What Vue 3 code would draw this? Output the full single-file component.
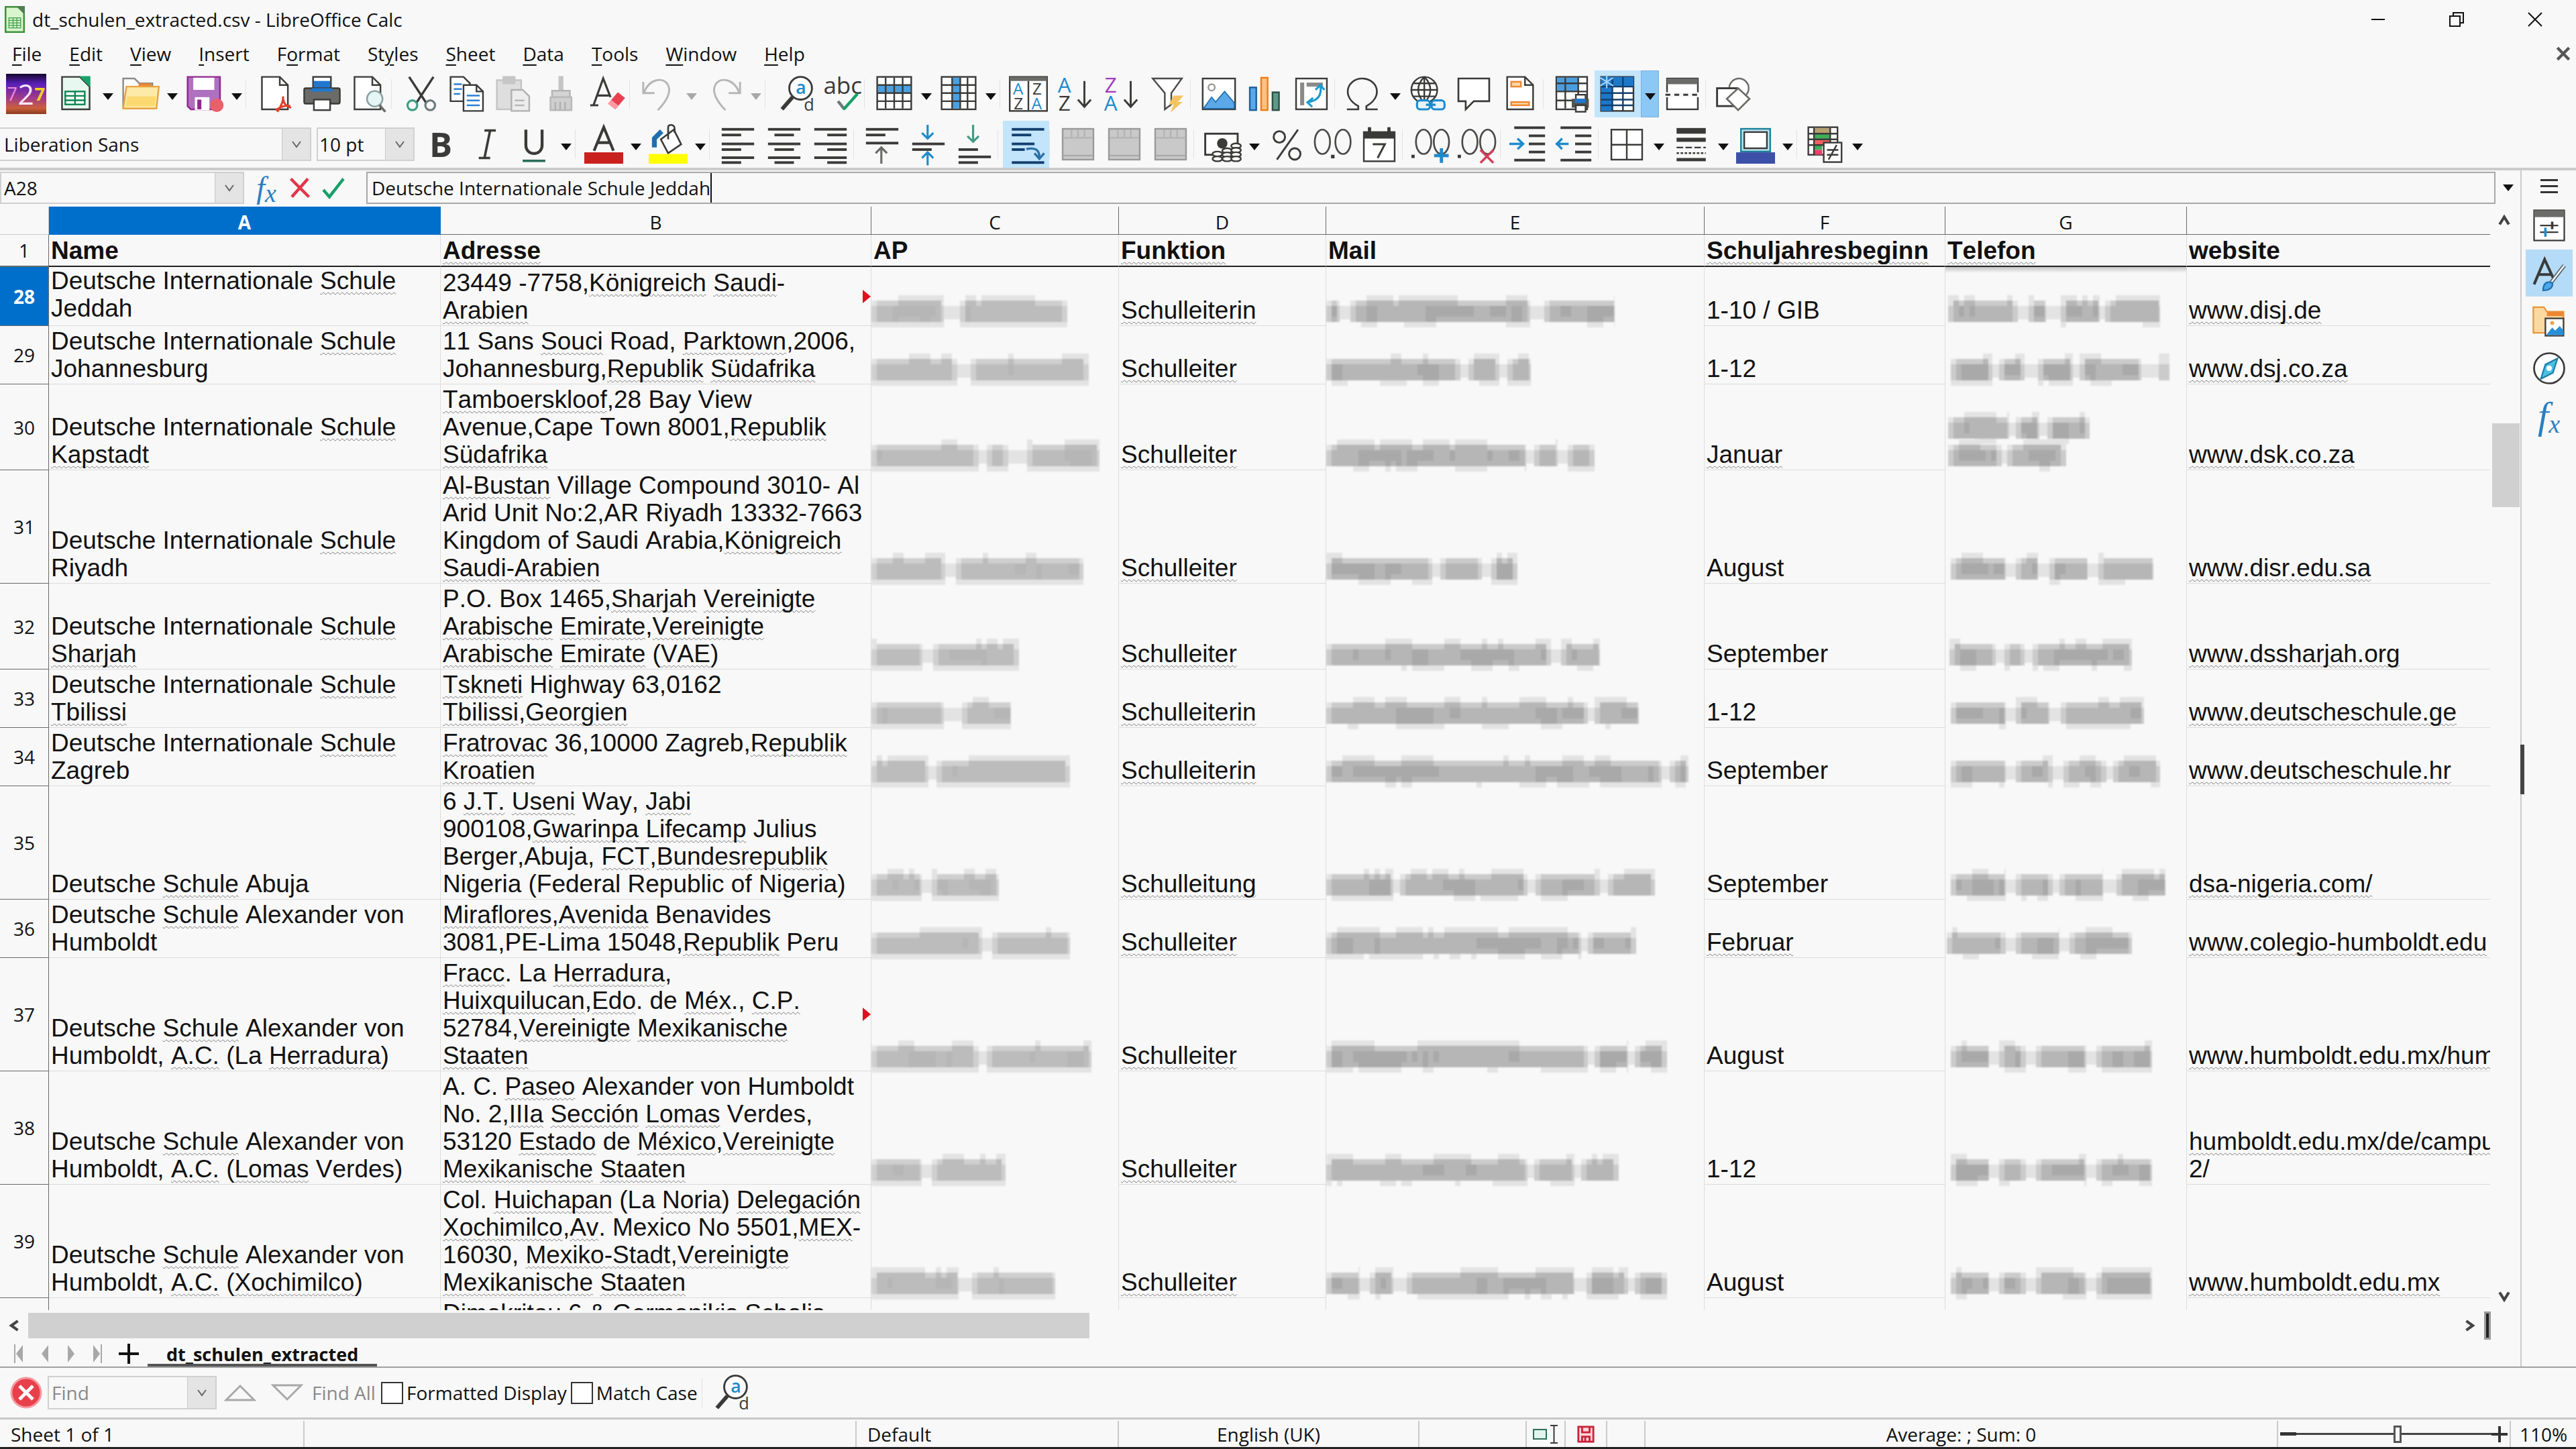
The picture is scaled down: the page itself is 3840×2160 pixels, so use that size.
<script setup>
import { ref } from 'vue'

const K = '#3a3a38'
const st = (d, c = K, w = 1, extra = '') =>
  `<path d="${d}" fill="none" stroke="${c}" stroke-width="${w}" ${extra}/>`
const box = (x, y, w, h, f = '#fff', s = K) =>
  `<rect x="${x}" y="${y}" width="${w}" height="${h}" fill="${f}" stroke="${s}"/>`
const bar = (x, y, w, h, f = K) => `<rect x="${x}" y="${y}" width="${w}" height="${h}" fill="${f}"/>`
const txt = (x, y, s, t, c = K, extra = '') =>
  `<text x="${x}" y="${y}" font-size="${s}" fill="${c}" font-family="Open Sans, sans-serif" ${extra}>${t}</text>`
const page = (x, s = K, f = '#fff') =>
  `<path d="M${x} 1.5h11l5 5v15h-16z" fill="${f}" stroke="${s}"/><path d="M${x + 11} 1.5v5h5" fill="none" stroke="${s}"/>`
const lines = (rows) => rows.map(([x, y, w]) => bar(x, y, w, 1.6)).join('')
const merge = '<rect x="2.5" y="2.500" width="19" height="19" fill="#c9c9c9" stroke="#9a9a9a"/><path d="M3 8h18M8 3v5M12 3v5M16 3v5" stroke="#b4b4b4" fill="none"/><path d="M3 19h18" stroke="#aaa"/>'
const zeros = (x) => `<ellipse cx="${x}" cy="10.500" rx="4.700" ry="7.500" fill="none" stroke="#4a4a48" stroke-width="1.100"/>`
const lens =
  `<g transform="translate(2.500 0)"><circle cx="13" cy="8.500" r="7" fill="#fff" stroke="${K}" stroke-width="1.200"/>` +
  st('M8 14l-6.500 7.500', K, 2.4) +
  txt(10, 12, 11, 'a', '#1e8bcd', 'font-weight="600"') +
  txt(15, 22.5, 10.5, 'd', K) + '</g>'

const icons = {
  app:
    '<defs><linearGradient id="dusk" x1="0" y1="0" x2="0" y2="1"><stop offset="0" stop-color="#14082e"/><stop offset=".25" stop-color="#5a1fb8"/><stop offset=".6" stop-color="#a03a8a"/><stop offset=".85" stop-color="#c9603c"/><stop offset="1" stop-color="#8a3a1e"/></linearGradient></defs><rect width="24" height="24" fill="url(#dusk)"/>' +
    txt(0.5, 16, 11, '7', '#f08adf') + txt(7, 18.5, 17, '2', '#ffe6ff') + txt(17, 16, 11, '7', '#f2d21e', 'font-weight="700"'),
  fresh:
    '<path d="M3.500 1.500h11l6 6v14h-17z" fill="#e6f8ef" stroke="#3a3a38"/><path d="M14 1h7v7z" fill="#18a068"/>' +
    '<rect x="5.500" y="10.500" width="12" height="8" fill="#fff" stroke="#0f8552"/><path d="M5 13.200h13M5 15.900h13M11.500 10v9" stroke="#0f8552" fill="none"/>',
  open:
    '<path d="M1.500 20.500v-18h7l3 3h8v5" fill="#fff" stroke="#8a8a88"/><path d="M11 5.500h8v2h-8z" fill="#ed8733"/><path d="M1.500 21l2-13.500h20L22 21z" fill="#fde9a8" stroke="#e8a33d"/><path d="M3 19.500h18l.6-6H4z" fill="#fbd970"/>',
  save:
    '<path d="M1.500 1.500h20v20h-18l-2-2z" fill="#b070c0" stroke="#92278f"/><rect x="5" y="2" width="13" height="7.500" fill="#fff"/><rect x="6" y="14" width="9" height="8" fill="#fff"/><rect x="7.500" y="15.500" width="2.500" height="6" fill="#92278f"/><circle cx="19.500" cy="19" r="4.200" fill="#e8606a"/>',
  pdf: page(3.5) + st('M13 23c2-3 4-7 3.500-9.500M12 22c3-2 6-3.500 9-2.500M16.500 15c.5 3 2 5 5 5.500', '#e0402a', 1.3),
  print:
    box(6.5, 1.5, 11, 7) + bar(7, 4, 10, 5, '#1e78d0') +
    '<rect x="1" y="8.500" width="22" height="9.500" rx="1" fill="#6b6b69" stroke="#3a3a38"/><path d="M6 8.500h12l1 2H5z" fill="#1e78d0"/>' + box(7, 15.5, 10, 6.5),
  preview: page(3.5) + '<circle cx="16" cy="15" r="4.800" fill="#e6f5f5" stroke="#8aa0a0"/>' + st('M19 19l3.500 4', '#6b6b69', 1.5),
  cut: st('M4.500 1.500l10.500 16M19.500 1.500L9 17.500', K, 1.4) + '<circle cx="6.500" cy="19" r="3" fill="none" stroke="#3f9c85" stroke-width="1.300"/><circle cx="17.500" cy="19" r="3" fill="none" stroke="#6b7b7b" stroke-width="1.300"/>',
  copy:
    '<path d="M1.500 1.500h8l4 4v11h-12z" fill="#fff" stroke="#3a3a38"/>' + st('M3.500 6h5M3.500 9h5M3.500 12h4', '#2a7fd0') +
    '<path d="M9.500 6.500h8l4 4v12h-12z" fill="#fff" stroke="#3a3a38"/>' + st('M17.500 6.500v4h4', K) + st('M11.500 13h8M11.500 16h8M11.500 19h8', '#2a7fd0'),
  paste:
    '<rect x="1.500" y="3.500" width="15" height="18" fill="#dedede" stroke="#c4c4c4"/><rect x="5" y="1" width="8" height="5" fill="#c6c6c6"/><path d="M10.500 9.500h7l4 4v9h-11z" fill="#ededed" stroke="#b0b0b0"/><path d="M12.500 16h6M12.500 19h6" stroke="#b8b8b8"/>',
  brush:
    '<path d="M11 1h3v9h-3z" fill="#c4c4c4"/><path d="M7 10h11v4H7z" fill="#d4d4d4" stroke="#b4b4b4"/><path d="M6 14h13v8H6z" fill="#cfcfcf" stroke="#b8b8b8"/><path d="M9 22v-5M12 22v-5M15 22v-5" stroke="#b0b0b0"/>',
  clear: st('M4 19L10 2.500 14.500 14M6.500 13h7', K, 1.3) + st('M2 19h5', K, 1.2) + '<path d="M13 18l6-7 4.500 3.500-6 7z" fill="#e8404e"/><path d="M13 18l2-2.300 4.500 3.500-2 2.300z" fill="#ff9aa2"/>',
  undo: st('M2 4.500v7h7M2.500 11C6 2.500 14 1.500 17 6s-1 11-6 16', '#b6b6b6', 1.2),
  redo: st('M22 4.500v7h-7M21.500 11C18 2.500 10 1.500 7 6s1 11 6 16', '#b6b6b6', 1.2),
  find: lens,
  spell: txt(1, 12, 14.5, 'abc') + st('M10 16.500l4 5', '#6b7b7b', 1.8) + st('M13.500 21.500L22 12', '#18a068', 1.8),
  row:
    box(1.5, 1.5, 21, 20) + bar(2, 6.5, 20, 5, '#4aa0e0') + st('M1.500 6.500h21M1.500 11.500h21M1.500 16.500h21M6.700 2v19M12 2v19M17.200 2v19'),
  col:
    box(1.5, 1.5, 21, 20) + bar(8, 2, 5, 19, '#4aa0e0') + st('M1.500 6.500h21M1.500 11.500h21M1.500 16.500h21M8 2v19M13 2v19M17.500 2v19'),
  sort:
    box(0.5, 1.5, 23, 21) + bar(0.5, 1.5, 23, 2.5, '#6b6b69') + st('M12 4v18') +
    txt(2.5, 12.5, 10, 'A', '#1e8bcd') + txt(3, 21.5, 10, 'Z') + txt(14.5, 12.5, 10, 'Z') + txt(14, 21.5, 10, 'A', '#1e8bcd'),
  asc: txt(1.5, 11, 13, 'A', '#1e8bcd') + txt(2, 22.5, 13, 'Z') + st('M18 4v16M14 15.500l4 4.500 4-4.500', K, 1.2),
  desc: txt(2, 11, 13, 'Z', '#a338c0') + txt(1.5, 22.5, 13, 'A', '#1e8bcd') + st('M18 4v16M14 15.500l4 4.500 4-4.500', K, 1.2),
  filter: '<path d="M3 2.500h18l-6.500 9v7l-4 3v-10z" fill="#fff" stroke="#4a4a48"/><path d="M16 13h6l-3.500 4h3L14 23.500l2-5h-3z" fill="#f5c460"/>',
  image: box(2, 2.5, 20, 19) + '<circle cx="7.500" cy="8" r="2" fill="none" stroke="#9a9a98"/><path d="M2.500 21l5-7 2.500 3 5.500-6.500 6 7V21z" fill="#5aa8e8" stroke="#1e6fb0" stroke-width=".7"/>',
  chart: box(2.5, 8, 4, 14, '#5aa8e8', '#1e5f9a') + box(9.5, 2, 4, 20, '#fcc080', '#ed7d1a') + box(16.5, 11, 4, 11, '#5d9a86', '#2c4f46'),
  pivot: box(2.5, 2.5, 19, 19) + bar(5, 5, 2.5, 14, '#8a8a88') + bar(9, 5, 10, 2.5, '#8a8a88') + st('M17.500 7c1 6-2 9-7 10M14.500 9.500l3-3 2.500 3M13 14.500l-3.500 2.700 3 2.800', '#1e9bd0', 1.3),
  omega: st('M2 21.500h7v-2C4.500 17 2.500 13.500 2.500 10.500 2.500 6 6.500 2.500 11.500 2.500s9 3.500 9 8c0 3-2 6.500-6.500 9v2h7', K, 1.1),
  link:
    '<circle cx="10" cy="9.500" r="8" fill="#fff" stroke="#3a3a38"/>' + st('M2 9.500h16M3.500 5.500h13M3.500 13.500h13M10 1.500v16M10 1.500c-5 5-5 11 0 16M10 1.500c5 5 5 11 0 16') +
    '<rect x="5.500" y="16" width="8" height="5.500" rx="2" fill="#e8f4fc" stroke="#1e8bcd" stroke-width="1.300"/><rect x="14.500" y="16" width="8" height="5.500" rx="2" fill="#e8f4fc" stroke="#1e8bcd" stroke-width="1.300"/>' + st('M11 18.700h6', '#1e8bcd', 1.4),
  note: '<path d="M2.500 2.500h19v14H12l-5 5v-5H2.500z" fill="#fff" stroke="#3a3a38" stroke-width="1.100"/>',
  header: page(4) + box(6.5, 4.5, 6, 3, '#fbd5a5', '#ed8733') + box(6.500, 17, 11, 2, '#fbd5a5', '#ed8733'),
  area:
    box(2.5, 1.5, 19, 20) + bar(3, 2, 13, 8.5, '#4a9ee0') + st('M2.500 5.500h19M2.500 10.500h19M2.500 16h19M8 2v19M16 2v19') +
    box(14.500, 12.500, 6, 4) + bar(12, 15, 10.5, 5.500, '#55534f') + bar(14, 15, 6.500, 2.600, '#1e78d0') + box(14.500, 19, 6, 4),
  freeze:
    box(1.5, 1.5, 20, 21) + bar(1.5, 1.5, 20, 6, '#1e78c8') + bar(1.5, 1.5, 7, 21, '#1e78c8') +
    st('M8.500 1.500v21M15 1.500v21M1.500 7.500h20M1.500 11.500h20M1.500 15.500h20M1.500 19h20', '#123f6e') +
    st('M5 .5v8M1 2l8 5M9 2L1 7', '#9fd4ff', 0.9),
  split: box(2.5, 2.5, 19, 19) + bar(2.5, 2.5, 19, 3.5, '#6b6b69') + bar(1, 11, 22, 3, '#f8f8f8') + st('M1.500 12.500h21', K, 1.2, 'stroke-dasharray="3 2.500"'),
  shapes: '<circle cx="15" cy="8.500" r="6" fill="#fff" stroke="#6b6b69"/><rect x="1.500" y="8.500" width="12" height="11" fill="#fff" stroke="#3a3a38" stroke-width="1.200"/><path d="M14.500 8.500l7 6.500-7 7-7-7z" fill="#fff" stroke="#6b6b69" stroke-width="1.100"/>',
  bold: txt(4.5, 20, 21, 'B', K, 'font-weight="700"'),
  italic: st('M10 3.500h7M6.500 20.500h7M13.500 3.500l-3.500 17', K, 1.5),
  underline: st('M7 3v9.500c0 7 10 7 10 0V3', K, 1.8) + bar(5, 21.5, 14, 1.5, '#2c6f5c'),
  color: st('M6 16L12 1.500 18 16M8 11h8', K, 1.7) + bar(0, 17, 24, 7, '#c9211e'),
  fill:
    st('M3.500 14V8.500L8 4', '#1e6fb0', 3) + '<path d="M7.500 9l8-6 4.500 9-8 5.500z" fill="#fff" stroke="#3a3a38" stroke-width="1.100"/>' + st('M12 9V1.500c0-2 4-2 4 1V5', K, 1.1) + bar(0, 18, 24, 6, '#ffff00'),
  left: lines([[2, 2, 20], [2, 5.500, 12], [2, 11, 20], [2, 14.500, 12], [2, 19.500, 20], [2, 22.500, 12]]),
  center: lines([[2, 2, 20], [6, 5.500, 12], [2, 11, 20], [6, 14.500, 12], [2, 19.500, 20], [6, 22.500, 12]]),
  right: lines([[2, 2, 20], [10, 5.500, 12], [2, 11, 20], [10, 14.500, 12], [2, 19.500, 20], [10, 22.500, 12]]),
  top: lines([[2, 2, 20], [2, 5.500, 12], [2, 10.500, 20]]) + st('M11.500 24V14M8 17.500l3.500-3.500 3.500 3.500', '#6b6b69', 1.3),
  middle: lines([[2, 11, 20], [2, 14.500, 12]]) + st('M11.500 0v8M8 5l3.500 3.500L15 5M11.500 25v-7M8 20.500l3.500-3.500 3.500 3.500', '#1e8bcd', 1.3),
  bottom: lines([[2, 14.500, 12], [2, 19, 20], [2, 22.500, 12]]) + st('M11 0v10M7.500 7l3.500 3.500L14.500 7', '#3f9c85', 1.3),
  wrap: [[3, 2, 20], [3, 5.500, 12], [3, 11, 14], [3, 14.500, 8], [3, 22.500, 20]].map(([x, y, w]) => bar(x, y, w, 1.6, '#123f6e')).join('') + st('M12 15c5-1 8 0 8 5M17 17.500l3 3.500 3-3.500', '#2a6fa8', 1.4),
  merge, mergeAll: merge, unmerge: merge,
  currency:
    '<rect x="1.500" y="5.500" width="20" height="13" fill="#fff" stroke="#3a3a38" stroke-width="1.200"/><circle cx="12" cy="11.500" r="3.200" fill="#3a3a38"/>' +
    '<g fill="#fff" stroke="#3a3a38"><ellipse cx="9" cy="18" rx="3" ry="1.500"/><ellipse cx="9" cy="21" rx="3" ry="1.500"/><ellipse cx="15" cy="16" rx="3" ry="1.500"/><ellipse cx="15" cy="18.500" rx="3" ry="1.500"/><ellipse cx="15" cy="21" rx="3" ry="1.500"/><ellipse cx="20.500" cy="13" rx="3" ry="1.500"/><ellipse cx="20.500" cy="15.700" rx="3" ry="1.500"/><ellipse cx="20.500" cy="18.400" rx="3" ry="1.500"/><ellipse cx="20.500" cy="21" rx="3" ry="1.500"/></g>',
  percent: st('M19 3L6 21.500', K, 1.2) + '<circle cx="7.500" cy="7.500" r="3.500" fill="none" stroke="#3a3a38" stroke-width="1.200"/><circle cx="17" cy="18" r="3.500" fill="none" stroke="#3a3a38" stroke-width="1.200"/>',
  number: zeros(5.5) + zeros(18.2) + bar(10.8, 18.5, 2.2, 2.2),
  date: box(2.5, 4.5, 19, 18) + bar(2.5, 4.5, 19, 4) + bar(5, 1.5, 2, 4) + bar(17, 1.500, 2, 4) + st('M8 12h7.500L11 20.500', K, 1.2),
  addDec: zeros(7.5) + zeros(18.5) + bar(0, 18.5, 2, 2) + bar(14, 18, 9, 2, '#1e8bcd') + bar(17.500, 14.500, 2, 9, '#1e8bcd'),
  delDec: zeros(7.5) + zeros(18.5) + bar(0, 18.5, 2, 2) + st('M14 23.500l8-8M14 15.500l8 8', '#d0405a', 1.4),
  indent: lines([[3, 1, 19], [12, 6, 10], [12, 11, 10], [12, 16, 10], [3, 21, 19]]) + st('M0 11.800h8M5 8.500l3.500 3.300L5 15', '#1e8bcd', 1.4),
  outdent: lines([[3, 1, 19], [12, 6, 10], [12, 11, 10], [12, 16, 10], [3, 21, 19]]) + st('M0 11.800h8M4 8.500L.8 11.800 4 15', '#1e8bcd', 1.4),
  borders: box(2.5, 3, 19, 18.500) + st('M12 3v18.500M2.500 12.300h19'),
  lineStyle: bar(3, 2, 18, 3.5) + bar(3, 8, 18, 2.5) + st('M3 14h18', K, 1, 'stroke-dasharray="4 1.500"') + st('M3 17.500h18', K, 1, 'stroke-dasharray="1.500 1"') + bar(3, 20.5, 18, 2),
  borderColor: box(3, 2.5, 18, 14, '#bfe6f5', '#1e7f9b') + box(5, 4.5, 14, 10) + bar(0, 17, 24, 7, '#3c50a8'),
  cond:
    box(1.5, 1.5, 18, 17) + bar(5, 2, 10, 3.500, '#b8a070') + bar(5, 5.5, 10, 3.500, '#3fae5a') + bar(5, 9, 10, 3.500, '#f06060') + bar(5, 12.5, 5, 3, '#3fae5a') + bar(5, 15.500, 5, 3, '#e8406a') +
    st('M1.500 5.500h18M1.500 9h18M1.500 12.500h18M5 2v17M15 2v17') + box(11, 11, 11, 12) + st('M13 15.500h7M13 18.500h7M19 12.500l-5 9'),
}

const main1 = [
  ['app'], ['fresh', 'c'], ['open', 'c'], ['save', 'c'], '||', ['pdf'], ['print'], ['preview'], '||',
  ['cut'], ['copy'], ['paste'], ['brush'], ['clear'], '||', ['undo', 'd'], ['redo', 'd'], '||', ['find'], ['spell'], '||',
  ['row', 'c'], ['col', 'c'], '|', ['sort'], ['asc'], ['desc'], ['filter'], '|', ['image'], ['chart'], ['pivot'], '|',
  ['omega', 'c'], ['link'], ['note'], ['header'], '|', ['area'], ['freeze', 'c', 'on'], ['split'], '|', ['shapes'],
]
const main2 = [
  ['bold'], ['italic'], ['underline', 'c'], '|', ['color', 'c'], ['fill', 'c'], '|', ['left'], ['center'], ['right'], '|',
  ['top'], ['middle'], ['bottom'], '|', ['wrap', '', 'on'], '|', ['merge'], ['mergeAll'], ['unmerge'], '|', ['currency', 'c'],
  ['percent'], ['number'], ['date'], '|', ['addDec'], ['delDec'], '|', ['indent'], ['outdent'], '|',
  ['borders', 'c'], ['lineStyle', 'c'], ['borderColor', 'c'], '|', ['cond', 'c'],
]

const side = {
  deck: box(2, 2, 20, 20) + bar(2, 2, 20, 4.500, '#6b6b69') + st('M6 12h12M6 16.500h12') + st('M14 9.500v5', K, 1.6) + st('M9.500 13.500v6', '#1e8bcd', 1.6),
  styles: st('M2 19.500L9 3l6 13M5 13h8', K, 1.8) + st('M22 7l-8.500 11', '#55656f', 2.6) + st('M22 7l-8.500 11', '#fff', 1) + '<path d="M8 23.500c0-5 3-6.500 6-5 1 3-2 5-6 5z" fill="#4aa8e8" stroke="#1e6fb0"/>',
  gallery: '<path d="M1.500 20V3h7l2 3h11v14z" fill="#fbd9a0" stroke="#e8973d"/><path d="M10.500 6h11v3h-11z" fill="#ed8733"/>' + box(9.5, 10.5, 12, 11.5) + '<path d="M10 21.500l4-5 2 2 3-3 2.500 3v3z" fill="#2a8fd8"/><circle cx="14" cy="13.500" r="1.300" fill="#f0a050"/>',
  compass: '<circle cx="12" cy="12" r="10" fill="#fff" stroke="#3a3a38" stroke-width="1.200"/><path d="M17.500 5.500l-3 9.500-8 4 3-9.500z" fill="#4ac0e0" stroke="#1e7fa8"/><circle cx="12" cy="12" r="1.800" fill="#fff"/>',
}

const menus = [['', 'F', 'ile'], ['', 'E', 'dit'], ['', 'V', 'iew'], ['', 'I', 'nsert'], ['F', 'o', 'rmat'], ['St', 'y', 'les'], ['', 'S', 'heet'], ['', 'D', 'ata'], ['', 'T', 'ools'], ['', 'W', 'indow'], ['', 'H', 'elp']]

const letters = ['A', 'B', 'C', 'D', 'E', 'F', 'G', '']
const heads = ['Name', '~Adresse~', 'AP', '~Funktion~', 'Mail', '~Schuljahresbeginn~', '~Telefon~', 'website']

const dis = 'Deutsche Internationale ~Schule~\n'
const dsa = 'Deutsche ~Schule~ Alexander von\n'
const rows = [
  { n: 28, a: dis + 'Jeddah', b: '23449 -7758,~Königreich~ ~Saudi~-\n~Arabien~', more: true, d: '~Schulleiterin~', f: '1-10 / GIB', h: '~www.disj.de~',
    c: [[0, 108], [132, 292]], e: [[0, 20], [36, 304], [325, 430]], g: [[[4, 108], [124, 150], [172, 230], [238, 320]]] },
  { n: 29, a: dis + 'Johannesburg', b: '11 Sans ~Souci~ Road, ~Parktown~,2006,\nJohannesburg,~Republik~ ~Südafrika~', d: '~Schulleiter~', f: '1-12', h: '~www.dsj.co.za~',
    c: [[0, 128], [148, 324]], e: [[0, 200], [212, 258], [270, 305]], g: [[[8, 70], [80, 118], [138, 190], [200, 292], [318, 334]]] },
  { n: 30, a: dis + '~Kapstadt~', b: '~Tamboerskloof~,28 Bay View\nAvenue,Cape Town 8001,~Republik~\n~Südafrika~', d: '~Schulleiter~', f: '~Januar~', h: '~www.dsk.co.za~',
    c: [[0, 160], [172, 204], [232, 340]], e: [[0, 298], [310, 345], [360, 400]], g: [[[4, 95], [105, 140], [152, 215]], [[4, 84], [92, 180]]] },
  { n: 31, a: dis + 'Riyadh', b: '~Al-Bustan~ Village Compound 3010- Al\nArid Unit No:2,AR Riyadh 13332-7663\nKingdom of Saudi Arabia,~Königreich~\n~Saudi-Arabien~', d: '~Schulleiter~', f: 'August', h: '~www.disr.edu.sa~',
    c: [[0, 110], [126, 316]], e: [[0, 158], [170, 232], [246, 285]], g: [[[8, 90], [105, 138], [155, 212], [228, 310]]] },
  { n: 32, a: dis + '~Sharjah~', b: 'P.O. Box 1465,~Sharjah~ ~Vereinigte~\n~Arabische~ ~Emirate~,~Vereinigte~\n~Arabische~ ~Emirate~ (~VAE~)', d: '~Schulleiter~', f: 'September', h: '~www.dssharjah.org~',
    c: [[0, 76], [92, 220]], e: [[0, 335], [350, 408]], g: [[[6, 75], [88, 118], [130, 278]]] },
  { n: 33, a: dis + '~Tbilissi~', b: '~Tskneti~ Highway 63,0162\n~Tbilissi~,~Georgien~', d: '~Schulleiterin~', f: '1-12', h: '~www.deutscheschule.ge~',
    c: [[0, 108], [135, 208]], e: [[0, 390], [400, 466]], g: [[[8, 90], [105, 155], [172, 296]]] },
  { n: 34, a: dis + 'Zagreb', b: '~Fratrovac~ 36,10000 Zagreb,~Republik~\n~Kroatien~', d: '~Schulleiterin~', f: 'September', h: '~www.deutscheschule.hr~',
    c: [[0, 85], [97, 296]], e: [[0, 500], [512, 540]], g: [[[8, 90], [105, 160], [176, 240], [250, 320]]] },
  { n: 35, a: 'Deutsche ~Schule~ Abuja', b: '6 ~J.T.~ ~Useni~ Way, ~Jabi~\n900108,~Gwarinpa~ ~Lifecamp~ Julius\nBerger,Abuja, ~FCT~,~Bundesrepublik~\nNigeria (Federal Republic of Nigeria)', d: '~Schulleitung~', f: 'September', h: '~dsa-nigeria.com/~',
    c: [[0, 75], [90, 190]], e: [[0, 100], [110, 300], [312, 408], [420, 490]], g: [[[8, 90], [105, 160], [170, 235], [255, 328]]] },
  { n: 36, a: dsa + 'Humboldt', b: '~Miraflores~,~Avenida~ Benavides\n3081,PE-Lima 15048,~Republik~ Peru', d: '~Schulleiter~', f: '~Februar~', h: '~www.colegio-humboldt.edu~',
    c: [[0, 165], [180, 296]], e: [[0, 380], [390, 462]], g: [[[2, 90], [105, 170], [185, 278]]] },
  { n: 37, a: dsa + 'Humboldt, ~A.C.~ (La ~Herradura~)', b: '~Fracc~. La ~Herradura~,\n~Huixquilucan~,~Edo~. de ~Méx~., ~C.P.~\n52784,~Vereinigte~ ~Mexikanische~\n~Staaten~', more: true, d: '~Schulleiter~', f: 'August', h: '~www.humboldt.edu.mx/hum~',
    c: [[0, 160], [172, 328]], e: [[0, 390], [400, 450], [460, 508]], g: [[[8, 65], [80, 120], [135, 210], [225, 308]]] },
  { n: 38, a: dsa + 'Humboldt, ~A.C.~ (~Lomas~ Verdes)', b: 'A. C. ~Paseo~ Alexander von Humboldt\nNo. 2,~IIIa~ ~Sección~ ~Lomas~ Verdes,\n53120 ~Estado~ de ~México~,~Vereinigte~\n~Mexikanische~ ~Staaten~', d: '~Schulleiter~', f: '1-12', h: '~humboldt.edu.mx/de/campu~\n2/',
    c: [[0, 75], [90, 200]], e: [[0, 300], [310, 370], [380, 436]], g: [[[8, 65], [80, 120], [135, 210], [225, 308]]] },
  { n: 39, a: dsa + 'Humboldt, ~A.C.~ (~Xochimilco~)', b: 'Col. ~Huichapan~ (La ~Noria~) ~Delegación~\n~Xochimilco~,~Av~. Mexico No 5501,~MEX~-\n16030, ~Mexiko-Stadt~,~Vereinigte~\n~Mexikanische~ ~Staaten~', d: '~Schulleiter~', f: 'August', h: '~www.humboldt.edu.mx~',
    c: [[0, 130], [150, 274]], e: [[0, 50], [65, 100], [120, 370], [388, 450], [460, 508]], g: [[[8, 65], [80, 120], [135, 210], [225, 308]]] },
  { n: '', a: '', b: 'Dimokritou 6 & Germanikis Scholis', d: '', f: '', h: '', c: [], e: [], g: [] },
]

// Splits a cell into lines; odd pieces of a line are the words the spell checker marks.
const textLines = (s) => s.split('\n').map((l) => l.split('~'))

// Builds the mosaic that hides private data: 8px tiles, lighter at the rim.
function mosaic(words, seed, soft) {
  let r = seed * 7919 + 13
  const rnd = () => (r = (r * 1103515245 + 12345) % 2147483648) / 2147483648
  const tones = soft ? ['#e3e3e3', '#cfcfcf', '#bcbcbc', '#b6b6b6'] : ['#e3e3e3', '#cbcbcb', '#b6b6b6', '#a9a9a9']
  const d = ['', '', '', '']
  let last = 0
  for (const [from, to] of words) {
    if (last) d[0] += `M${last} 14h${from - last}v20h-${from - last}z`
    last = to
    let tall = false
    let deep = false
    let dark = 2
    for (let x = from; x < to; x += 8) {
      const w = Math.min(8, to - x)
      const edge = x === from || x + 8 >= to
      if (rnd() < 0.4) tall = rnd() < 0.4
      if (rnd() < 0.4) deep = rnd() < 0.5
      if (rnd() < 0.4) dark = rnd() < (soft ? 0.2 : 0.45) ? 3 : 2
      const col = [tall ? 0 : -1, edge ? 0 : tall ? 2 : 1, edge ? 1 : dark, edge ? 1 : dark, edge ? 1 : deep ? dark : 2, deep || soft ? 0 : -1]
      col.forEach((t, i) => {
        if (t >= 0) d[t] += `M${x} ${i * 8 - 2}h${w}v8h-${w}z`
      })
    }
  }
  return d.map((p, i) => ({ p, fill: tones[i] }))
}

const name = ref('A28')
const formula = ref('Deutsche Internationale Schule Jeddah')
const search = ref('')
const zoom = ref(52)
</script>

<template>
  <div class="window">
    <header class="title">
      <svg class="doc" viewBox="0 0 24 32"><path d="M1 1h15l7 7v23H1z" fill="#d9f5cf" stroke="#3f8f3a" stroke-width="2" /><path d="M14 0h10v10z" fill="#4f7f52" /><path d="M5 14h14v12H5zM5 17h14M5 20h14M5 23h14M10 14v12M14.500 14v12" fill="none" stroke="#3f9c4a" /></svg>
      <h1>dt_schulen_extracted.csv - LibreOffice Calc</h1>
      <button class="win" aria-label="Minimise"><svg viewBox="0 0 24 24"><path d="M2 12h20" /></svg></button>
      <button class="win" aria-label="Restore"><svg viewBox="0 0 24 24"><path d="M2 7h15v15H2zM7 7V2h15v15h-5" /></svg></button>
      <button class="win" aria-label="Close"><svg viewBox="0 0 24 24"><path d="M2 2l20 20M22 2L2 22" /></svg></button>
    </header>

    <nav class="menu">
      <button v-for="m in menus" :key="m.join('')">{{ m[0] }}<u>{{ m[1] }}</u>{{ m[2] }}</button>
      <button class="docclose" aria-label="Close document"><svg viewBox="0 0 24 24"><path d="M4 4l16 16M20 4L4 20" /></svg></button>
    </nav>

    <div class="bar">
      <template v-for="(t, i) in main1" :key="i">
        <i v-if="t[0] === '|'" class="sep" :class="{ wide: t === '||' }"></i>
        <template v-else>
          <button class="tool" :class="[t[0], { on: t[2] }]" :aria-label="t[0]"><svg viewBox="0 0 24 24" v-html="icons[t[0]]"></svg></button>
          <button v-if="t[1]" class="caret" :class="{ dim: t[1] === 'd', on: t[2] }" :aria-label="t[0] + ' options'"></button>
        </template>
      </template>
    </div>

    <div class="bar second">
      <label class="combo family"><select aria-label="Font name"><option>Liberation Sans</option></select><span class="drop"><svg viewBox="0 0 16 16"><path d="M2 4l6 8 6-8" /></svg></span></label>
      <label class="combo points"><select aria-label="Font size"><option>10 pt</option></select><span class="drop"><svg viewBox="0 0 16 16"><path d="M2 4l6 8 6-8" /></svg></span></label>
      <template v-for="(t, i) in main2" :key="i">
        <i v-if="t[0] === '|'" class="sep"></i>
        <template v-else>
          <button class="tool" :class="{ on: t[2] }" :aria-label="t[0]"><svg viewBox="0 0 24 24" v-html="icons[t[0]]"></svg></button>
          <button v-if="t[1]" class="caret" :aria-label="t[0] + ' options'"></button>
        </template>
      </template>
    </div>

    <div class="work">
      <main>
        <div class="formula">
          <div class="combo cellname"><input v-model="name" aria-label="Name box" /><button class="drop" aria-label="Names"><svg viewBox="0 0 16 16"><path d="M2 4l6 8 6-8" /></svg></button></div>
          <button class="mini fx" aria-label="Function wizard"><em>f<sub>x</sub></em></button>
          <button class="mini" aria-label="Cancel"><svg viewBox="0 0 24 24"><path d="M3 3l18 18M20 3L4 21" stroke="#e0364a" /></svg></button>
          <button class="mini" aria-label="Accept"><svg viewBox="0 0 24 24"><path d="M2 14l6 7L22 3" stroke="#18a068" /></svg></button>
          <div class="line"><input v-model="formula" aria-label="Input line" /><i class="cursor"></i></div>
          <button class="caret expand" aria-label="Expand"></button>
        </div>

        <div class="grid">
          <div class="sheet">
            <table>
              <colgroup>
                <col class="w0" /><col class="wa" /><col class="wb" /><col class="wc" /><col class="wd" /><col class="we" /><col class="wf" /><col class="wg" /><col />
              </colgroup>
              <thead>
                <tr class="letters"><th></th><th v-for="l in letters" :key="l" :class="{ sel: l === 'A' }">{{ l }}</th></tr>
                <tr class="frozen">
                  <th class="num">1</th>
                  <th v-for="h in heads" :key="h"><div v-for="(l, j) in textLines(h)" :key="j"><span v-for="(p, i) in l" :key="i" :class="{ sp: i % 2 }">{{ p }}</span></div></th>
                </tr>
              </thead>
              <tbody>
                <tr v-for="r in rows" :key="r.n">
                  <th class="num" :class="{ sel: r.n === 28 }">{{ r.n }}</th>
                  <td :class="{ edit: r.n === 28 }"><div v-for="(l, j) in textLines(r.a)" :key="j"><span v-for="(p, i) in l" :key="i" :class="{ sp: i % 2 }">{{ p }}</span></div></td>
                  <td><div v-for="(l, j) in textLines(r.b)" :key="j"><span v-for="(p, i) in l" :key="i" :class="{ sp: i % 2 }">{{ p }}</span></div><i v-if="r.more" class="more"></i></td>
                  <td class="hid"><svg class="mosaic" aria-hidden="true"><path v-for="m in mosaic(r.c, r.n, true)" :key="m.fill" :d="m.p" :fill="m.fill" /></svg></td>
                  <td><div v-for="(l, j) in textLines(r.d)" :key="j"><span v-for="(p, i) in l" :key="i" :class="{ sp: i % 2 }">{{ p }}</span></div></td>
                  <td class="hid"><svg class="mosaic" aria-hidden="true"><path v-for="m in mosaic(r.e, r.n + 50, false)" :key="m.fill" :d="m.p" :fill="m.fill" /></svg></td>
                  <td><div v-for="(l, j) in textLines(r.f)" :key="j"><span v-for="(p, i) in l" :key="i" :class="{ sp: i % 2 }">{{ p }}</span></div></td>
                  <td class="hid" :class="{ shade: r.n === 28 }"><svg v-for="(g, i) in r.g" :key="i" class="mosaic" aria-hidden="true"><path v-for="m in mosaic(g, r.n + i + 90, false)" :key="m.fill" :d="m.p" :fill="m.fill" /></svg></td>
                  <td><div v-for="(l, j) in textLines(r.h)" :key="j"><span v-for="(p, i) in l" :key="i" :class="{ sp: i % 2 }">{{ p }}</span></div></td>
                </tr>
              </tbody>
            </table>
          </div>
          <div class="vscroll">
            <button aria-label="Scroll up"><svg viewBox="0 0 16 16"><path d="M3 12l5-8 5 8" /></svg></button>
            <div class="track"><i class="thumb"></i></div>
            <button aria-label="Scroll down"><svg viewBox="0 0 16 16"><path d="M3 4l5 8 5-8" /></svg></button>
          </div>
        </div>

        <div class="hscroll">
          <button aria-label="Scroll left"><svg viewBox="0 0 16 16"><path d="M12 3L5 8l7 5" /></svg></button>
          <div class="track"><i class="thumb"></i></div>
          <button aria-label="Scroll right"><svg viewBox="0 0 16 16"><path d="M4 3l7 5-7 5" /></svg></button>
          <i class="grip"></i>
        </div>

        <div class="tabs">
          <button class="nav" aria-label="First sheet"><svg viewBox="0 0 16 32"><path d="M1 2h2v28H1zM14 3v26L4 16z" /></svg></button>
          <button class="nav" aria-label="Previous sheet"><svg viewBox="0 0 16 32"><path d="M13 3v26L3 16z" /></svg></button>
          <button class="nav" aria-label="Next sheet"><svg viewBox="0 0 16 32"><path d="M3 3v26l10-13z" /></svg></button>
          <button class="nav" aria-label="Last sheet"><svg viewBox="0 0 16 32"><path d="M13 2h2v28h-2zM2 3v26l10-13z" /></svg></button>
          <button class="plus" aria-label="Add sheet"><svg viewBox="0 0 32 32"><path d="M16 1v30M1 16h30" /></svg></button>
          <button class="tab">dt_schulen_extracted</button>
        </div>
      </main>

      <aside>
        <button aria-label="Sidebar settings" class="burger"><i></i><i></i><i></i></button>
        <button aria-label="Properties"><svg viewBox="0 0 24 24" v-html="side.deck"></svg></button>
        <button aria-label="Styles" class="on"><svg viewBox="0 0 24 24" v-html="side.styles"></svg></button>
        <button aria-label="Gallery"><svg viewBox="0 0 24 24" v-html="side.gallery"></svg></button>
        <button aria-label="Navigator"><svg viewBox="0 0 24 24" v-html="side.compass"></svg></button>
        <button aria-label="Functions" class="fx"><em>f<sub>x</sub></em></button>
        <i class="handle"></i>
      </aside>
    </div>

    <div class="findbar">
      <button class="close" aria-label="Close find bar"><svg viewBox="0 0 48 48"><circle cx="24" cy="24" r="22" fill="#e8404a" stroke="#f59aa0" stroke-width="3" /><path d="M14 14l20 20M34 14L14 34" stroke="#fff" stroke-width="5" /></svg></button>
      <div class="combo search"><input v-model="search" placeholder="Find" aria-label="Find" /><button class="drop" aria-label="Recent searches"><svg viewBox="0 0 16 16"><path d="M2 4l6 8 6-8" /></svg></button></div>
      <button class="tri" aria-label="Find previous"><svg viewBox="0 0 48 28"><path d="M3 25L24 4l21 21z" /></svg></button>
      <button class="tri" aria-label="Find next"><svg viewBox="0 0 48 28"><path d="M3 3l21 21L45 3z" /></svg></button>
      <button class="all">Find All</button>
      <label class="check"><input type="checkbox" />Formatted Display</label>
      <label class="check"><input type="checkbox" />Match Case</label>
      <i class="sep"></i>
      <button class="tool" aria-label="Find and replace"><svg viewBox="0 0 24 24" v-html="icons.find"></svg></button>
    </div>

    <footer>
      <span class="s1">Sheet 1 of 1</span>
      <span class="s2"></span>
      <span class="s3">Default</span>
      <span class="s4">English (UK)</span>
      <span class="s5"></span>
      <span class="s6"><svg viewBox="0 0 40 30"><path d="M2 8h19v14H2z" fill="#e0f5ee" stroke="#2c6f5c" stroke-width="2" /><path d="M27 2h11M27 28h11M32.500 2v26" fill="none" stroke="#3a3a38" stroke-width="2" /></svg></span>
      <span class="s7"><svg viewBox="0 0 28 28"><path d="M2 2h24v24H2z" fill="#fbd5da" stroke="#c8203a" stroke-width="3" /><path d="M8 2v9h12V2M8 26v-8h12v8M13 19v6" fill="none" stroke="#c8203a" stroke-width="3" /></svg></span>
      <span class="s8"></span>
      <span class="s9">Average: ; Sum: 0</span>
      <span class="s10"><b class="minus"></b><input v-model="zoom" type="range" min="0" max="100" aria-label="Zoom" /><b class="add"></b></span>
      <span class="s11">110%</span>
    </footer>
  </div>
</template>

<style>
body { background: #f8f8f8; }
</style>

<style scoped>
* { box-sizing: border-box; }
.window { display: flex; flex-direction: column; height: 100vh; background: #f8f8f8; color: #111; font: 28px/36px "Open Sans", sans-serif; overflow: hidden; border-bottom: 3px solid #222; }
button { border: 0; padding: 0; margin: 0; background: none; color: inherit; font: inherit; }
input, select { font: inherit; color: inherit; border: 0; background: none; padding: 0; margin: 0; outline: 0; border-radius: 0; }
svg { display: block; }
h1 { margin: 0; font-size: 28px; font-weight: 400; }

.title { display: flex; align-items: center; height: 58px; padding: 0 8px 0 7px; gap: 11px; flex: none; }
.doc { width: 30px; height: 40px; }
.title h1 { flex: 1; }
.win { width: 106px; height: 58px; display: grid; place-items: center; }
.win svg { width: 24px; height: 24px; fill: none; stroke: #111; stroke-width: 2; }

.menu { display: flex; align-items: center; height: 46px; gap: 41px; padding: 0 6px 2px 18px; flex: none; }
.menu u { text-underline-offset: 5px; text-decoration-thickness: 2px; }
.docclose { margin-left: auto; }
.docclose svg { width: 26px; height: 26px; fill: none; stroke: #555; stroke-width: 4; }

.bar { display: flex; align-items: center; height: 72px; padding-left: 9px; flex: none; }
.second { height: 78px; padding: 4px 0 0; border-bottom: 4px solid #cbcbcb; }
.tool { width: 69px; height: 70px; display: grid; place-items: center; flex: none; }
.tool svg { width: 58px; height: 58px; overflow: visible; }
.tool.app { justify-items: start; }
.tool.app svg { width: 60px; height: 60px; }
.tool.on { background: #c2e5fc; }
.caret { width: 27px; height: 70px; display: grid; place-items: center; flex: none; }
.caret::before { content: ""; border: 8px solid transparent; border-top: 10px solid #111; border-bottom: 0; }
.bar .caret::before { margin-top: 8px; }
.caret.dim::before { border-top-color: #a8a8a8; }
.caret.on { background: #8cc8f5; border: 1px solid #7ab0dc; }
.sep { width: 8px; height: 44px; border-left: 1px solid #e2e2e2; flex: none; }
.sep.wide { width: 10px; }

.combo { display: flex; height: 50px; border: 2px solid #d0d0d0; background: #f8f8f8; flex: none; }
.combo select, .combo input { flex: 1; min-width: 0; appearance: none; padding-left: 4px; }
.family { width: 464px; margin-right: 8px; border-left: 0; }
.family select { padding-left: 6px; }
.points { width: 146px; margin-right: 5px; }
.points select { padding-left: 2px; }
.drop { width: 42px; display: grid; place-items: center; background: #e4e4e4; border-left: 1px solid #c8c8c8; flex: none; }
.drop svg { width: 18px; height: 16px; fill: none; stroke: #666; stroke-width: 2; }

.work { flex: 1; min-height: 0; display: flex; border-bottom: 2px solid #a0a0a0; }
main { flex: 1; min-width: 0; display: flex; flex-direction: column; padding-top: 2px; }
.formula { display: flex; height: 48px; align-items: stretch; flex: none; }
.cellname { width: 364px; height: 48px; margin-right: 8px; }
.mini { width: 50px; display: grid; place-items: center; }
.mini svg { width: 36px; height: 36px; fill: none; stroke-width: 3; }
.fx em { font: italic 46px/40px "Liberation Serif", serif; color: #2a7fc0; }
.fx sub { font-size: 38px; line-height: 20px; vertical-align: -6px; }
.line { flex: 1; display: flex; border: 2px solid #a8a8a8; margin-left: 24px; padding-left: 6px; font-kerning: none; }
.line input { field-sizing: content; font-kerning: none; }
.cursor { width: 2px; background: #111; }
.expand { width: 37px; height: 48px; }

.grid { flex: 1; min-height: 0; display: flex; padding-top: 4px; }
.sheet { flex: 1; min-width: 0; overflow: hidden; }
table { table-layout: fixed; width: 100%; border-collapse: separate; border-spacing: 0; }
.w0 { width: 73px; } .wa { width: 584px; } .wb { width: 642px; } .wc { width: 369px; } .wd { width: 309px; } .we { width: 564px; } .wf { width: 359px; } .wg { width: 360px; }
th, td { font-weight: 400; padding: 2px 0 2px 3px; border: 0 solid #dcdcdc; border-right-width: 1px; border-bottom-width: 1px; text-align: left; vertical-align: bottom; }
.letters th { height: 42px; padding: 0; text-align: center; line-height: 36px; border-color: #6a6a6a; }
.letters th:first-child { border-color: #c8c8c8; }
th.sel, .letters th.sel { background: #006fcb; color: #fff; font-weight: 700; border-color: #006fcb; }
.frozen th { height: 48px; border-bottom: 2px solid #222; font: 700 37px/41px "Liberation Sans", sans-serif; white-space: nowrap; }
tbody td { font: 37px/41px "Liberation Sans", sans-serif; white-space: pre; position: relative; overflow: hidden; }
td div { height: 41px; }
th div, td div { font-kerning: none; }
td.edit { padding: 0 0 5px 3px; }
th.num, .frozen th.num { font: 400 28px/36px "Open Sans", sans-serif; text-align: center; vertical-align: middle; padding: 0; border-right-color: #6a6a6a; }
th.num { border-bottom-color: #6a6a6a; }
.num.num.sel { font-weight: 700; }
th:last-child, td:last-child { border-right: 0; }
td.hid { padding: 2px 0; border-bottom-color: transparent; overflow: visible; }
td.shade { background: linear-gradient(#c4c4c4, #f8f8f8) top / 100% 9px no-repeat; }
.mosaic { width: 100%; height: 41px; overflow: visible; filter: blur(1px); }
.sp { text-decoration: underline wavy #7c7c7c 1px; text-underline-offset: 4px; text-decoration-skip-ink: none; }
.more { position: absolute; right: 0; top: 50%; margin-top: -10px; border: 10px solid transparent; border-left: 12px solid #e0101e; border-right: 0; }

.vscroll { width: 45px; display: flex; flex-direction: column; }
.vscroll button, .hscroll button { width: 42px; height: 42px; display: grid; place-items: center; flex: none; }
.vscroll svg, .hscroll svg { width: 22px; height: 22px; fill: none; stroke: #444; stroke-width: 3; }
.track { flex: 1; position: relative; }
.thumb { position: absolute; background: #d0d0d0; }
.vscroll .thumb { left: 3px; right: 1px; top: 18%; height: 8%; }
.hscroll { display: flex; height: 46px; align-items: center; padding-right: 44px; flex: none; }
.hscroll .track { align-self: stretch; }
.hscroll .thumb { left: 0; top: 4px; bottom: 4px; width: calc(44% - 10px); }
.grip { width: 10px; height: 42px; border: 3px solid #9a9a9a; background: #222; }

.tabs { display: flex; align-items: center; height: 38px; padding-left: 8px; flex: none; }
.nav { width: 39px; height: 38px; display: grid; place-items: center; }
.nav svg { width: 16px; height: 32px; fill: #a8a8a8; }
.plus { width: 56px; display: grid; place-items: center; }
.plus svg { width: 32px; height: 32px; stroke: #111; stroke-width: 4; }
.tab { height: 38px; padding: 6px 28px 0; font-weight: 700; font-size: 27px; line-height: 28px; border-bottom: 4px solid #555; }

aside { width: 83px; border-left: 2px solid #cbcbcb; display: flex; flex-direction: column; align-items: center; position: relative; flex: none; }
aside button { width: 70px; height: 70px; margin-bottom: 1px; display: grid; place-items: center; flex: none; }
aside svg { width: 54px; height: 54px; overflow: visible; }
aside .on { background: #b4dbf7; }
aside .burger { height: 46px; align-content: center; gap: 6px; }
.burger i { width: 26px; height: 3px; background: #333; }
aside .fx em { font-size: 58px; line-height: 50px; }
.handle { position: absolute; left: -2px; top: 48%; width: 6px; height: 74px; background: #444; }

.findbar { display: flex; align-items: center; height: 77px; border-bottom: 3px solid #c8c8c8; flex: none; padding-left: 15px; }
.close svg { width: 48px; height: 48px; }
.search { width: 252px; margin-left: 8px; margin-right: 11px; }
.search input::placeholder { color: #8a8a8a; opacity: 1; }
.tri { width: 70px; }
.tri svg { width: 48px; height: 28px; fill: none; stroke: #a8a8a8; stroke-width: 3; }
.all { color: #8a8a8a; width: 98px; text-align: left; margin-right: 5px; white-space: nowrap; margin-left: -9px; }
.check { display: flex; align-items: center; gap: 5px; margin-right: 6px; white-space: nowrap; }
.check input { appearance: none; width: 33px; height: 33px; border: 2px solid #333; background: #fff; }

footer { display: flex; height: 41px; flex: none; padding-top: 2px; }
footer span { border-right: 2px solid #cbcbcb; display: flex; align-items: center; justify-content: center; white-space: nowrap; flex: none; }
.s1 { width: 454px; } .s2 { width: 823px; } .s3 { width: 391px; } .s4 { width: 448px; } .s5 { width: 160px; } .s6 { width: 58px; } .s7 { width: 62px; } .s8 { width: 57px; }
footer .s1, footer .s3 { justify-content: flex-start; padding-left: 16px; }
footer .s9 { flex: 1; }
footer .s10 { width: 347px; padding: 0 3px; }
footer .s11 { width: 97px; border: 0; }
.s6 svg { width: 40px; height: 30px; }
.s7 svg { width: 26px; height: 26px; }
.s10 input { appearance: none; flex: 1; min-width: 0; height: 36px; background: linear-gradient(#444, #444) center / 100% 3px no-repeat; }
.s10 input::-webkit-slider-thumb { appearance: none; width: 12px; height: 26px; border: 3px solid #555; background: #f8f8f8; }
.minus { width: 24px; height: 5px; background: #333; }
.add { width: 24px; height: 24px; background: linear-gradient(#333, #333) center / 100% 4px no-repeat, linear-gradient(#333, #333) center / 4px 100% no-repeat; }
</style>
